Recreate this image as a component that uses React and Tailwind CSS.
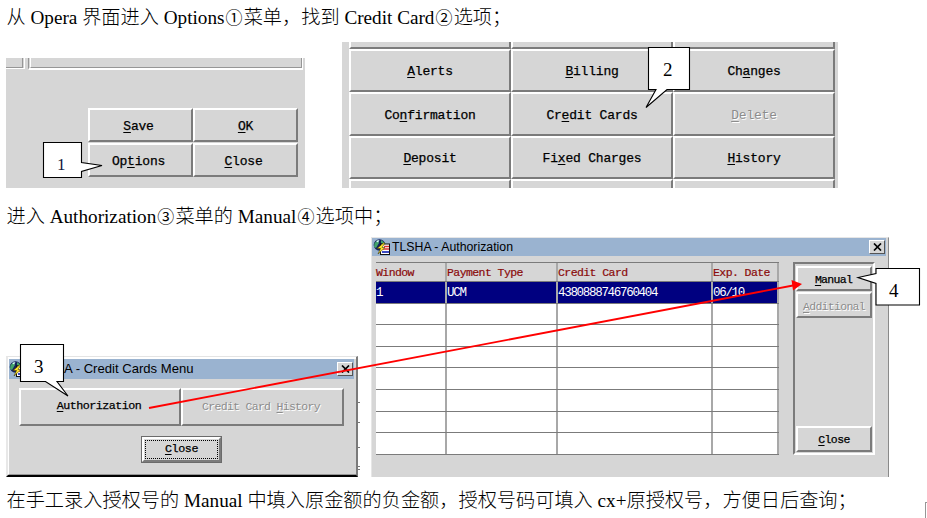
import React from "react";

const SERIF = "font-['Liberation_Serif','Noto_Sans_CJK_SC',serif]";
const MONO = "font-['Liberation_Mono',monospace]";
const SANS = "font-['Liberation_Sans',sans-serif]";

/* A label with one underlined accelerator letter, e.g. "Co|n|firmation". */
function Label({ text }) {
  const [before, key, after] = text.split("|");
  return (
    <span className="whitespace-pre">
      {before}
      <span className="underline decoration-1 underline-offset-2">{key}</span>
      {after}
    </span>
  );
}

function Button({ text, className = "", disabled = false, size = "text-[13px] tracking-[-0.2px] pt-[2px]" }) {
  return (
    <div
      className={`flex items-center justify-center border-2 border-t-white border-l-white border-r-[#7b7b7b] border-b-[#7b7b7b] bg-[#d6d6d6] leading-none ${MONO} ${size} ${
        disabled ? "text-[#8c8c8c] [text-shadow:1px_1px_0_#fff]" : "text-black [-webkit-text-stroke:0.25px_#000]"
      } ${className}`}
    >
      {text && <Label text={text} />}
    </div>
  );
}

function CloseBox() {
  return (
    <div className="flex h-[14px] w-4 items-center justify-center border border-t-white border-l-white border-r-[#555] border-b-[#555] bg-[#d6d6d6]">
      <svg width="9" height="8" viewBox="0 0 9 8">
        <path d="M1 .5 8 7.5M8 .5 1 7.5" stroke="#000" strokeWidth="1.7" />
      </svg>
    </div>
  );
}

function AppIcon() {
  return (
    <svg width="17" height="16" viewBox="0 0 17 16" className="shrink-0">
      <circle cx="6.5" cy="6" r="5.8" fill="#14205c" />
      <path d="M1.5 4 5 1l1 3-3 5-2-1zM8 1l4 3-1 2-3-2z" fill="#42a36b" />
      <path d="M3 2 6.500 1 5 3.500z" fill="#dff" />
      <rect x="7.5" y="5" width="9" height="10.500" fill="#fff" stroke="#111" />
      <path d="M11 7.500h5M10 10h6" stroke="#d33" strokeWidth="1.4" />
      <path d="M9 13h7" stroke="#2636bd" strokeWidth="1.8" />
      <path d="M10.500 4 4 9.500h3.500L5 15l7-6.500H9L12 4z" fill="#ffe52e" stroke="#443c00" strokeWidth=".6" />
    </svg>
  );
}

function ReservationPanel() {
  return (
    <div className="mt-4 flex h-[130px] w-[299px] flex-col bg-[#d6d6d6]">
      <div className="flex h-[12px] gap-[3px]">
        <div className="h-[11px] w-[19px] border-r border-b border-white">
          <div className="h-[10px] w-[17px] border-r border-b border-[#969696]" />
        </div>
        <div className="h-[12px] w-[275px] border-r border-b-2 border-l border-white border-l-[#969696]">
          <div className="ml-px h-[10px] w-[272px] border-r border-b border-l border-[#969696] border-l-white" />
        </div>
      </div>
      <div className="mt-[38px] ml-[82px] grid grid-cols-[105px_105px] grid-rows-[34px_34px] gap-y-px">
        <Button text="|S|ave" className="pt-1 pr-1" />
        <Button text="|O|K" className="pt-1 pr-0" />
        <Button text="Op|t|ions" className="pt-1 pr-1" />
        <Button text="|C|lose" className="pt-1 pr-1" />
      </div>
    </div>
  );
}

function OptionsPanel() {
  return (
    <div className="ml-[37px] h-[146px] w-[496px] overflow-hidden bg-[#d6d6d6] pl-[7px]">
      <div className="grid grid-cols-[162px_162px_162px] grid-rows-[7px_43px_44px_43px_20px]">
        <Button className="border-t-0" />
        <Button className="border-t-0" />
        <Button className="border-t-0" />
        <Button text="|A|lerts" />
        <Button text="|B|illing" />
        <Button text="Ch|a|nges" />
        <Button text="Co|n|firmation" />
        <Button text="Cr|e|dit Cards" />
        <Button text="|D|elete" disabled />
        <Button text="|D|eposit" />
        <Button text="Fi|x|ed Charges" />
        <Button text="|H|istory" />
        <Button />
        <Button />
        <Button />
      </div>
    </div>
  );
}

function CreditCardsMenu() {
  return (
    <div className="mt-[119px] flex h-[121px]">
      <div className="flex h-[121px] w-[352px] flex-col border-t border-r-2 border-b-2 border-l-2 border-t-[#e4e4e4] border-r-[#7b7b7b] border-b-black border-l-[#e8e8e8] bg-[#d6d6d6]">
        <div className="flex grow flex-col border-t-2 border-b border-l border-white border-b-[#969696]">
          <div className="mr-[2px] flex h-5 items-center bg-[#9ab3d0] pr-px">
            <AppIcon />
            <span className={`ml-[38px] grow text-[13.1px] leading-none whitespace-pre text-black ${SANS}`}>
              A - Credit Cards Menu
            </span>
            <CloseBox />
          </div>
          <div className="mt-[9px] ml-[10px] flex">
            <Button text="|A|uthorization" size="text-[11.7px] tracking-[-0.52px]" className="h-[38px] w-[162px] pr-[2px]" />
            <Button
              text="Credit Card |H|istory"
              size="text-[11.5px] tracking-[-0.7px]"
              disabled
              className="h-[38px] w-[163px] pr-[3px]"
            />
          </div>
          <div className="mt-[10px] ml-[132px] h-[27px] w-[81px] border border-[#6b6b6b]">
            <Button
              text="|C|lose"
              size="text-[11.7px] tracking-[-0.4px]"
              className="h-[25px] w-[79px] pt-px outline-1 -outline-offset-4 outline-dotted outline-black"
            />
          </div>
        </div>
      </div>
      <div className="flex w-[2px] flex-col pt-[46px]">
        <div className="h-5 border-t border-[#777]" />
        <div className="h-[25px] border-t border-[#777]" />
        <div className="h-[19px] border-t border-[#777]" />
        <div className="h-1 border-y border-[#777]" />
      </div>
    </div>
  );
}

const ROW_HEIGHTS = ["h-[21px]", "h-[22px]", "h-[21px]", "h-[22px]", "h-[22px]", "h-[21px]", "h-[22px]"];

function TableRow({ cells, className, cellClass }) {
  return (
    <div className={`flex border-b ${className}`}>
      {["w-[71px]", "w-[111px]", "w-[155px]", "w-[66px]"].map((w, i) => (
        <div key={i} className={`flex shrink-0 items-center border-r-2 border-[#a8a8a8] leading-none whitespace-pre ${w} ${cellClass}`}>
          {cells[i]}
        </div>
      ))}
    </div>
  );
}

function AuthorizationWindow() {
  return (
    <div className="ml-[11px] h-[240px] w-[518px] border-t border-r border-l border-[#e6e6e6] border-r-[#8a8a8a] bg-[#d6d6d6]">
      <div className="mr-[2px] flex h-[18px] items-center bg-[#9ab3d0] pr-px pl-px">
        <AppIcon />
        <span className={`ml-[2px] grow text-[12.3px] leading-none whitespace-pre text-black ${SANS}`}>TLSHA - Authorization</span>
        <CloseBox />
      </div>
      <div className="mt-[6px] ml-1 flex">
        <div className="w-[403px] border-t border-[#7b7b7b]">
          <TableRow
            cells={["Window", "Payment Type", "Credit Card", "Exp. Date"]}
            className="h-[19px] border-[#7b7b7b]"
            cellClass={`${MONO} text-[11.5px] tracking-[-0.58px] text-[#8a0a0a] [-webkit-text-stroke:0.2px_#8a0a0a] pt-[2px]`}
          />
          <TableRow
            cells={["1", "UCM", "4380888746760404", "06/10"]}
            className="h-[22px] border-[#7b7b7b] bg-[#000080]"
            cellClass={`${MONO} text-[12.5px] tracking-[-1.3px] text-white pt-px`}
          />
          {ROW_HEIGHTS.map((h, i) => (
            <TableRow key={i} cells={[]} className={`${h} border-[#7b7b7b] bg-white`} cellClass="" />
          ))}
        </div>
        <div className="ml-[14px] flex h-[193px] w-[82px] flex-col border-2 border-t-[#7b7b7b] border-r-white border-b-white border-l-[#7b7b7b] px-px pt-[2px] pb-px">
          <Button text="|M|anual" size="text-[11.5px] tracking-[-0.7px]" className="h-[25px] w-[76px] pt-[3px] pr-px" />
          <Button text="|A|dditional" size="text-[11.5px] tracking-[-0.7px]" disabled className="mt-px h-[26px] w-[76px] pt-[3px]" />
          <Button text="|C|lose" size="text-[11.5px] tracking-[-0.6px]" className="mt-auto h-[26px] w-[76px] pt-px" />
        </div>
      </div>
    </div>
  );
}

function Callouts() {
  return (
    <svg className="pointer-events-none absolute top-0 left-0" width="927" height="518" viewBox="0 0 927 518">
      <g fill="#fff" stroke="#000" strokeWidth="1.1">
        <path d="M43.5 142.5H81.5V162.5L102 165.5 81.5 171.5V177.5H43.5Z" />
        <path d="M648.5 47.5H689.5V89.5H667L646 107.5 656 89.5H648.5Z" />
        <path d="M20.5 344.5H63.5V381.5H57L68 396 45.500 381.5H20.5Z" />
        <path d="M876 268.500H919.5V305H876V283.500L858 277.500 876 273.500Z" />
      </g>
      <path d="M149 408 793 285.500" stroke="#f00" strokeWidth="1.8" />
      <path d="M802 284 791.500 280 793 290.500Z" fill="#f00" />
      <g className="font-['Liberation_Serif',serif] text-[19px]" fill="#000">
        <text x="57" y="170" className="text-[17px]" fill="#101840">1</text>
        <text x="663" y="76">2</text>
        <text x="34" y="373">3</text>
        <text x="889" y="297">4</text>
      </g>
    </svg>
  );
}

function Circled({ children }) {
  return <span className="inline-block w-[19.2px] text-center text-[17px] leading-none font-normal">{children}</span>;
}

export default function App() {
  const line = `flex items-center pl-[6.5px] text-[19.2px] font-light leading-none whitespace-pre text-black ${SERIF}`;
  return (
    <div className="relative h-[518px] w-[927px] overflow-hidden bg-white">
      <p className={`h-[42px] pb-[7px] ${line}`}>
        <span>从 Opera 界面进入 Options<Circled>①</Circled>菜单，找到 Credit Card<Circled>②</Circled>选项；</span>
      </p>
      <div className="flex h-[146px] pl-[6px]">
        <ReservationPanel />
        <OptionsPanel />
      </div>
      <p className={`h-[49px] pt-[8px] ${line}`}>
        <span>进入 Authorization<Circled>③</Circled>菜单的 Manual<Circled>④</Circled>选项中；</span>
      </p>
      <div className="flex h-[240px] pl-[6px]">
        <CreditCardsMenu />
        <AuthorizationWindow />
      </div>
      <div className="flex h-[41px] items-end justify-between">
        <p className={`h-[41px] pt-[6px] ${line}`}>
          <span>在手工录入授权号的 Manual 中填入原金额的负金额，授权号码可填入 cx+原授权号，方便日后查询；</span>
        </p>
        <div className="h-4 w-[2px] border-t border-l border-[#969696]" />
      </div>
      <Callouts />
    </div>
  );
}
